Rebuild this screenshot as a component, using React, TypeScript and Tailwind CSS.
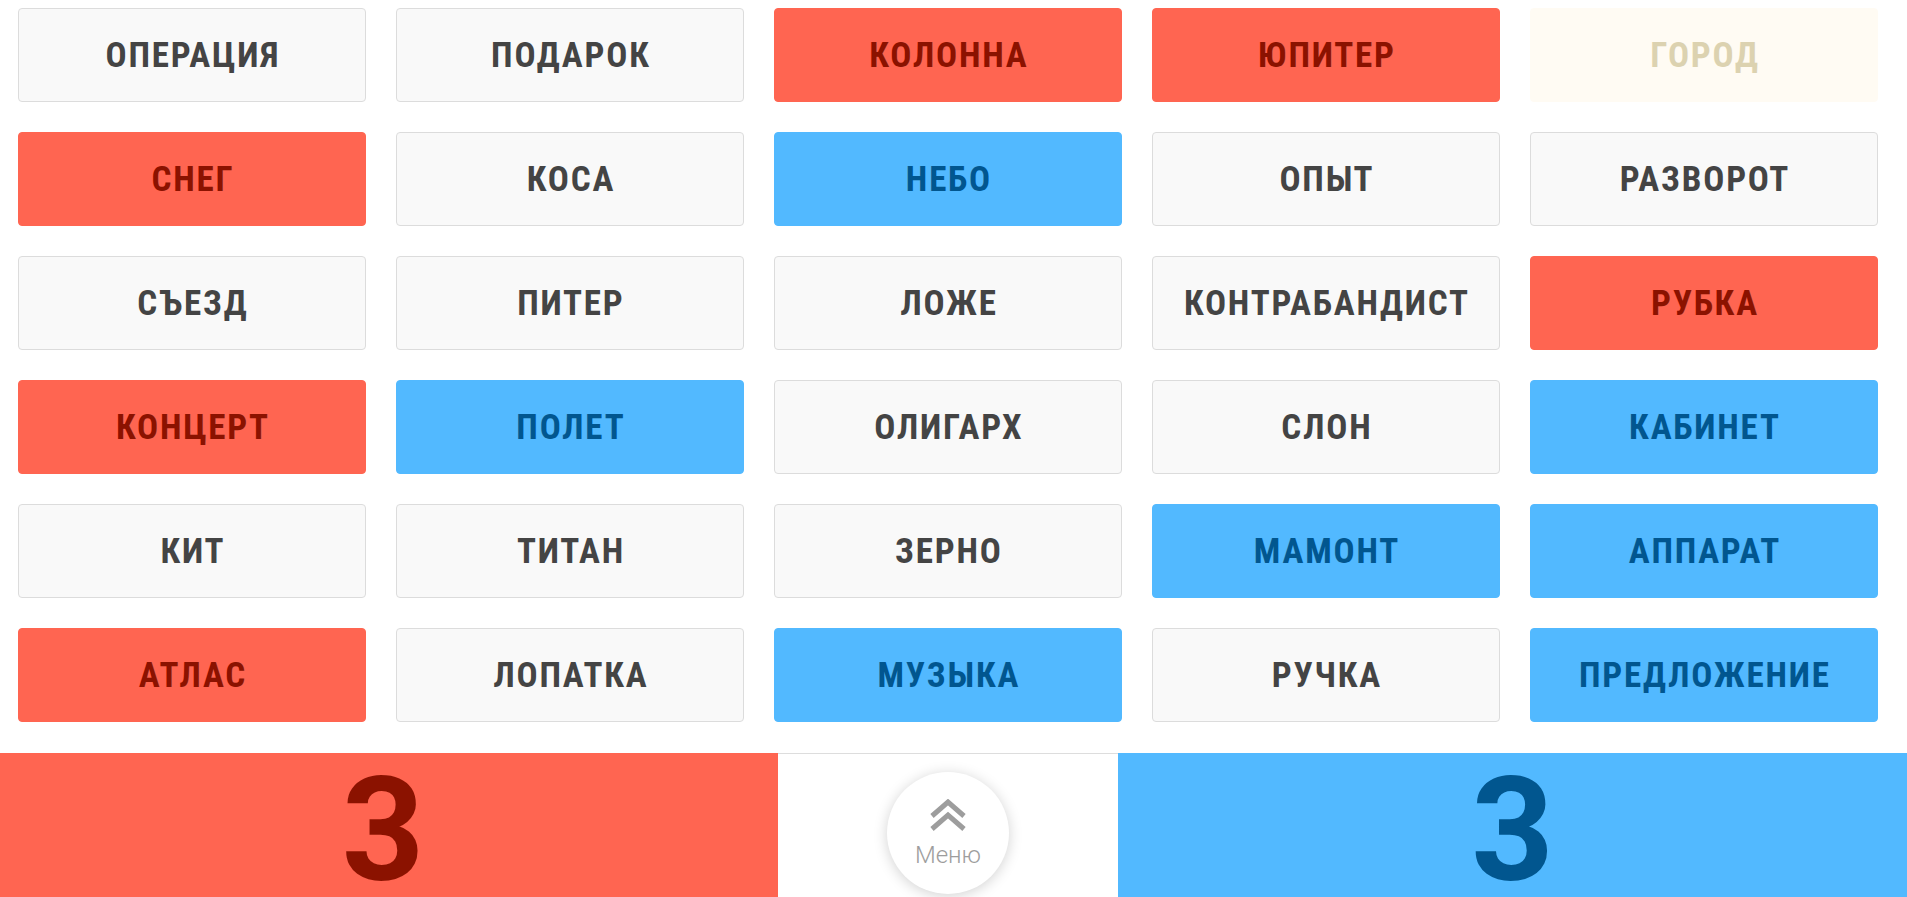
import { useState } from "react";

type Kind = "n" | "r" | "b" | "x";

type Word = {
  text: string;
  kind: Kind;
};

const words: Word[] = [
  { text: "ОПЕРАЦИЯ", kind: "n" },
  { text: "ПОДАРОК", kind: "n" },
  { text: "КОЛОННА", kind: "r" },
  { text: "ЮПИТЕР", kind: "r" },
  { text: "ГОРОД", kind: "x" },
  { text: "СНЕГ", kind: "r" },
  { text: "КОСА", kind: "n" },
  { text: "НЕБО", kind: "b" },
  { text: "ОПЫТ", kind: "n" },
  { text: "РАЗВОРОТ", kind: "n" },
  { text: "СЪЕЗД", kind: "n" },
  { text: "ПИТЕР", kind: "n" },
  { text: "ЛОЖЕ", kind: "n" },
  { text: "КОНТРАБАНДИСТ", kind: "n" },
  { text: "РУБКА", kind: "r" },
  { text: "КОНЦЕРТ", kind: "r" },
  { text: "ПОЛЕТ", kind: "b" },
  { text: "ОЛИГАРХ", kind: "n" },
  { text: "СЛОН", kind: "n" },
  { text: "КАБИНЕТ", kind: "b" },
  { text: "КИТ", kind: "n" },
  { text: "ТИТАН", kind: "n" },
  { text: "ЗЕРНО", kind: "n" },
  { text: "МАМОНТ", kind: "b" },
  { text: "АППАРАТ", kind: "b" },
  { text: "АТЛАС", kind: "r" },
  { text: "ЛОПАТКА", kind: "n" },
  { text: "МУЗЫКА", kind: "b" },
  { text: "РУЧКА", kind: "n" },
  { text: "ПРЕДЛОЖЕНИЕ", kind: "b" },
];

const kindClass: Record<Kind, string> = {
  n: "bg-[#f9f9f9] border-[#dcdcdc] text-[#444444]",
  r: "bg-[#ff6551] border-[#ff6551] text-[#8b1200]",
  b: "bg-[#52b9ff] border-[#52b9ff] text-[#01568f]",
  x: "bg-[#fffbf3] border-[#fffbf3] text-[#dcd2b0]",
};

export default function App() {
  const [open, setOpen] = useState(false);

  return (
    <div className="min-h-screen bg-white font-['Roboto',sans-serif]">
      <div className="grid grid-cols-5 gap-x-[30px] gap-y-[30px] pl-[18px] pr-[29px] pt-[8px]">
        {words.map((w) => (
          <div
            key={w.text}
            className={`flex h-[94px] items-center justify-center rounded-[4px] border ${kindClass[w.kind]}`}
          >
            <span className="pl-[1.8px] text-[35px] font-bold leading-none tracking-[1.8px] [font-stretch:condensed]">
              {w.text}
            </span>
          </div>
        ))}
      </div>

      <div className="mt-[31px] flex h-[156px]">
        <div className="flex w-[778px] items-center justify-center bg-[#ff6551] pr-[12px]">
          <span className="text-[144px] font-bold leading-none text-[#8b1200]">3</span>
        </div>
        <div className="flex w-[340px] items-start justify-center border-t border-[#dddddd] bg-white pt-[18px]">
          <button
            onClick={() => setOpen(!open)}
            className="flex h-[122px] w-[122px] flex-col items-center justify-center rounded-full bg-white shadow-[0_2px_14px_rgba(0,0,0,0.18)]"
          >
            <svg width="36" height="32" viewBox="0 0 36 32" fill="none" stroke="#9d9d9d" strokeWidth="5">
              <path d="M2 17 L18 3 L34 17" />
              <path d="M2 30 L18 16 L34 30" />
            </svg>
            <span className="mt-[12px] text-[24px] font-light leading-none text-[#9d9d9d]">Меню</span>
          </button>
        </div>
        <div className="flex flex-1 items-center justify-center bg-[#52b9ff]">
          <span className="text-[144px] font-bold leading-none text-[#01568f]">3</span>
        </div>
      </div>
    </div>
  );
}
